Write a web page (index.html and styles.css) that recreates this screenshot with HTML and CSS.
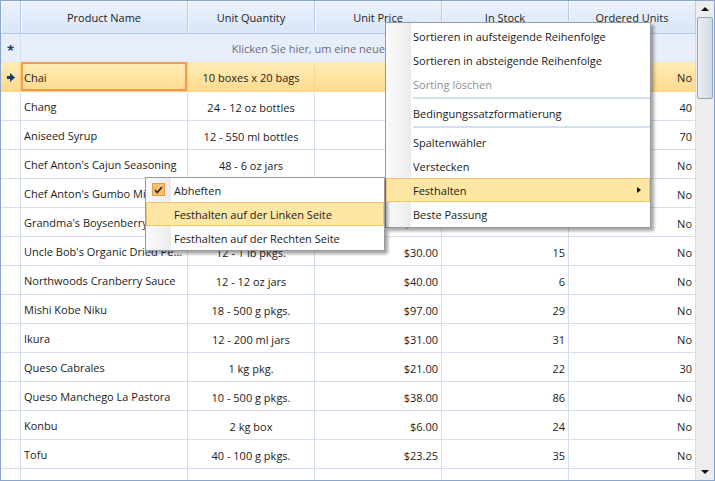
FILE: index.html
```html
<!DOCTYPE html>
<html lang="de">
<head>
<meta charset="utf-8">
<title>Grid</title>
<link rel="stylesheet" href="styles.css">
</head>
<body>
<div class="grid">
  <div class="main">
    <div class="row hdr">
      <div class="c ind"></div>
      <div class="c">Product Name</div>
      <div class="c">Unit Quantity</div>
      <div class="c">Unit Price</div>
      <div class="c">In Stock</div>
      <div class="c">Ordered Units</div>
    </div>
    <div class="newrow">
      <div class="c ind">*</div>
      <div class="newtext">Klicken Sie hier, um eine neue Zeile hinzuzufügen</div>
    </div>
    <div class="row sel">
      <div class="c ind"><svg width="8" height="9" viewBox="0 0 8 9"><path d="M0 3h3V0l5 4.5L3 9V6H0z" fill="#1b3a6e"/></svg></div>
      <div class="c l cur">Chai</div><div class="c m">10 boxes x 20 bags</div><div class="c r">$18.00</div><div class="c r">39</div><div class="c r">No</div>
    </div>
    <div class="row"><div class="c ind"></div><div class="c l">Chang</div><div class="c m">24 - 12 oz bottles</div><div class="c r">$19.00</div><div class="c r">17</div><div class="c r">40</div></div>
    <div class="row"><div class="c ind"></div><div class="c l">Aniseed Syrup</div><div class="c m">12 - 550 ml bottles</div><div class="c r">$10.00</div><div class="c r">13</div><div class="c r">70</div></div>
    <div class="row"><div class="c ind"></div><div class="c l">Chef Anton's Cajun Seasoning</div><div class="c m">48 - 6 oz jars</div><div class="c r">$22.00</div><div class="c r">53</div><div class="c r">No</div></div>
    <div class="row"><div class="c ind"></div><div class="c l">Chef Anton's Gumbo Mix</div><div class="c m">36 boxes</div><div class="c r">$21.35</div><div class="c r">0</div><div class="c r">No</div></div>
    <div class="row"><div class="c ind"></div><div class="c l">Grandma's Boysenberry Spread</div><div class="c m">12 - 8 oz jars</div><div class="c r">$25.00</div><div class="c r">120</div><div class="c r">No</div></div>
    <div class="row"><div class="c ind"></div><div class="c l">Uncle Bob's Organic Dried Pea...</div><div class="c m">12 - 1 lb pkgs.</div><div class="c r">$30.00</div><div class="c r">15</div><div class="c r">No</div></div>
    <div class="row"><div class="c ind"></div><div class="c l">Northwoods Cranberry Sauce</div><div class="c m">12 - 12 oz jars</div><div class="c r">$40.00</div><div class="c r">6</div><div class="c r">No</div></div>
    <div class="row"><div class="c ind"></div><div class="c l">Mishi Kobe Niku</div><div class="c m">18 - 500 g pkgs.</div><div class="c r">$97.00</div><div class="c r">29</div><div class="c r">No</div></div>
    <div class="row"><div class="c ind"></div><div class="c l">Ikura</div><div class="c m">12 - 200 ml jars</div><div class="c r">$31.00</div><div class="c r">31</div><div class="c r">No</div></div>
    <div class="row"><div class="c ind"></div><div class="c l">Queso Cabrales</div><div class="c m">1 kg pkg.</div><div class="c r">$21.00</div><div class="c r">22</div><div class="c r">30</div></div>
    <div class="row"><div class="c ind"></div><div class="c l">Queso Manchego La Pastora</div><div class="c m">10 - 500 g pkgs.</div><div class="c r">$38.00</div><div class="c r">86</div><div class="c r">No</div></div>
    <div class="row"><div class="c ind"></div><div class="c l">Konbu</div><div class="c m">2 kg box</div><div class="c r">$6.00</div><div class="c r">24</div><div class="c r">No</div></div>
    <div class="row"><div class="c ind"></div><div class="c l">Tofu</div><div class="c m">40 - 100 g pkgs.</div><div class="c r">$23.25</div><div class="c r">35</div><div class="c r">No</div></div>
    <div class="row"><div class="c ind"></div><div class="c l"></div><div class="c m"></div><div class="c r"></div><div class="c r"></div><div class="c r"></div></div>
  </div>
  <div class="vscroll">
    <div class="sbtn"><span class="tri up"></span></div>
    <div class="thumb"></div>
    <div class="track"></div>
    <div class="sbtn"><span class="tri down"></span></div>
  </div>

  <div class="menu main-menu">
    <div class="mi">Sortieren in aufsteigende Reihenfolge</div>
    <div class="mi">Sortieren in absteigende Reihenfolge</div>
    <div class="mi dis">Sorting löschen</div>
    <div class="msep"></div>
    <div class="mi">Bedingungssatzformatierung</div>
    <div class="msep"></div>
    <div class="mi">Spaltenwähler</div>
    <div class="mi">Verstecken</div>
    <div class="mi hot">Festhalten<span class="sub-arrow"></span></div>
    <div class="mi">Beste Passung</div>
  </div>

  <div class="menu sub-menu">
    <div class="mi"><span class="check"><svg width="9" height="8" viewBox="0 0 9 8"><path d="M1 4l2.3 2.5L8 1" fill="none" stroke="#2a2a2a" stroke-width="1.8"/></svg></span>Abheften</div>
    <div class="mi hot">Festhalten auf der Linken Seite</div>
    <div class="mi">Festhalten auf der Rechten Seite</div>
  </div>
</div>
</body>
</html>
```

FILE: styles.css
```css
html, body {
  margin: 0;
  padding: 0;
  background: #ffffff;
}

.grid {
  position: relative;
  width: 715px;
  height: 481px;
  box-sizing: border-box;
  border: 1px solid #8aa4cc;
  display: flex;
  overflow: hidden;
  font-family: "Open Sans", "Noto Sans", sans-serif;
  font-size: 11px;
  color: #1c1c1c;
  background: #ffffff;
}

.main {
  width: 695px;
  flex: none;
  display: flex;
  flex-direction: column;
}

.row {
  display: grid;
  grid-template-columns: 20px 167px repeat(4, 127px);
  height: 29px;
  flex: none;
}

.c {
  box-sizing: border-box;
  border-right: 1px solid #d3dff0;
  border-bottom: 1px solid #d3dff0;
  display: flex;
  align-items: center;
  white-space: nowrap;
  overflow: hidden;
  min-width: 0;
  padding-top: 2px;
}

.c.l { padding-left: 3px; padding-right: 3px; text-overflow: ellipsis; display: block; line-height: 26px; }
.c.m { justify-content: center; }
.c.r { justify-content: flex-end; padding-right: 3px; }

.hdr {
  height: 33px;
  background: linear-gradient(#ebf2fc, #d8e6f8);
}

.hdr .c {
  justify-content: center;
  color: #1e1e1e;
  padding-top: 1px;
  border-right: 1px solid #b9cde8;
  border-bottom: 1px solid #b3c9e6;
  box-shadow: inset 1px 1px 0 #f6faff;
}

.ind {
  justify-content: center;
}

.newrow {
  display: flex;
  height: 28px;
  flex: none;
  background: #e8eef9;
  box-sizing: border-box;
  border-bottom: 1px solid #dfe7f4;
}

.newrow .ind {
  width: 20px;
  flex: none;
  border-bottom: none;
  font-size: 13px;
  color: #1b3a6e;
  font-weight: bold;
  padding-top: 4px;
}

.newtext {
  flex: 1;
  display: flex;
  align-items: center;
  justify-content: center;
  padding-top: 2px;
  color: #6a6a7e;
  border-right: 1px solid #d3dff0;
}

.sel {
  height: 30px;
  background: linear-gradient(#ffecb8, #fed98c);
}

.sel .c {
  border-bottom: 1px solid #fbd48a;
  border-right-color: #fbd48a;
}

.sel .c.l { line-height: 27px; }

.sel .cur {
  box-shadow: inset 0 0 0 2px #f99a48;
}

.vscroll {
  width: 18px;
  flex: none;
  display: flex;
  flex-direction: column;
  background: #ededed;
}

.sbtn {
  height: 16px;
  flex: none;
  display: flex;
  align-items: center;
  justify-content: center;
}

.tri {
  width: 0;
  height: 0;
  border-left: 4px solid transparent;
  border-right: 4px solid transparent;
}

.tri.up { border-bottom: 4px solid #111; }
.tri.down { border-top: 4px solid #111; }

.thumb {
  height: 82px;
  flex: none;
  margin: 0 1px 0 1px;
  box-sizing: border-box;
  border: 1px solid #95a3bb;
  border-radius: 2px;
  background: linear-gradient(to right, #e9ecf2, #d5dae3);
}

.track {
  flex: 1;
}

.menu {
  position: absolute;
  box-sizing: border-box;
  background: #ffffff;
  border: 1px solid #9a9a9a;
  box-shadow: 3px 3px 3px rgba(0, 0, 0, 0.35);
  display: flex;
  flex-direction: column;
}

.menu::before {
  content: "";
  position: absolute;
  left: 0;
  top: 0;
  bottom: 0;
  width: 25px;
  background: linear-gradient(to right, #fafafa, #ebebeb);
}

.main-menu {
  left: 384px;
  top: 21px;
  width: 266px;
  padding: 1px 0;
}

.sub-menu {
  left: 144px;
  top: 176px;
  width: 240px;
}

.mi {
  position: relative;
  height: 24px;
  flex: none;
  display: flex;
  align-items: center;
  padding-left: 27px;
  box-sizing: border-box;
  color: #1a1a1a;
  white-space: nowrap;
}

.sub-menu .mi { padding-left: 28px; }

.mi.dis { color: #8e8e8e; }

.mi.hot {
  background: #fee6a4;
  box-shadow: inset 0 0 0 1px #f3c46f;
  z-index: 1;
}

.msep {
  position: relative;
  height: 5px;
  flex: none;
  margin-left: 27px;
  display: flex;
  align-items: center;
}

.msep::after {
  content: "";
  flex: 1;
  height: 2px;
  background: #d2dff1;
  border-bottom: 1px solid #ffffff;
}

.sub-arrow {
  position: absolute;
  right: 9px;
  top: 9px;
  width: 0;
  height: 0;
  border-top: 3px solid transparent;
  border-bottom: 3px solid transparent;
  border-left: 4px solid #111;
}

.check {
  position: absolute;
  left: 6px;
  top: 5px;
  width: 13px;
  height: 13px;
  box-sizing: border-box;
  background: #fbc06d;
  border: 1px solid #e99a45;
  display: flex;
  align-items: center;
  justify-content: center;
}
```
